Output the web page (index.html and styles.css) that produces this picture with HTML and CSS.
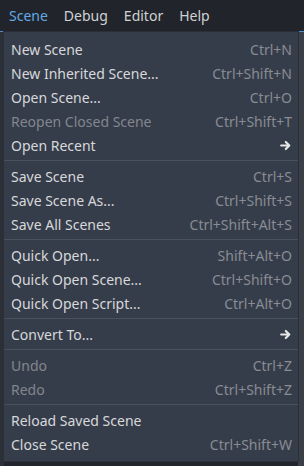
FILE: index.html
```html
<!DOCTYPE html>
<html lang="en">
<head>
    <meta charset="UTF-8">
    <meta name="viewport" content="width=device-width, initial-scale=1.0">
    <title>Scene Menu</title>
    <link rel="stylesheet" href="styles.css">
</head>
<body>
    <div class="menubar">
        <span class="menubar-item active">Scene</span>
        <span class="menubar-item">Debug</span>
        <span class="menubar-item">Editor</span>
        <span class="menubar-item">Help</span>
    </div>
    <div class="workspace">
        <div class="panel-left"></div>
        <div class="panel-right"></div>
    </div>

    <div class="popup">
        <div class="item"><span>New Scene</span><span class="shortcut">Ctrl+N</span></div>
        <div class="item"><span>New Inherited Scene...</span><span class="shortcut">Ctrl+Shift+N</span></div>
        <div class="item"><span>Open Scene...</span><span class="shortcut">Ctrl+O</span></div>
        <div class="item disabled"><span>Reopen Closed Scene</span><span class="shortcut">Ctrl+Shift+T</span></div>
        <div class="item"><span>Open Recent</span>
            <svg class="arrow" width="11" height="11" viewBox="0 0 11 11"><path d="M1.2 5.5H9.3M5.8 2L9.3 5.5L5.8 9" fill="none" stroke="#e6e6e6" stroke-width="2.2" stroke-linecap="round" stroke-linejoin="round"/></svg>
        </div>
        <div class="separator"></div>
        <div class="item"><span>Save Scene</span><span class="shortcut">Ctrl+S</span></div>
        <div class="item"><span>Save Scene As...</span><span class="shortcut">Ctrl+Shift+S</span></div>
        <div class="item"><span>Save All Scenes</span><span class="shortcut">Ctrl+Shift+Alt+S</span></div>
        <div class="separator"></div>
        <div class="item"><span>Quick Open...</span><span class="shortcut">Shift+Alt+O</span></div>
        <div class="item"><span>Quick Open Scene...</span><span class="shortcut">Ctrl+Shift+O</span></div>
        <div class="item"><span>Quick Open Script...</span><span class="shortcut">Ctrl+Alt+O</span></div>
        <div class="separator"></div>
        <div class="item"><span>Convert To...</span>
            <svg class="arrow" width="11" height="11" viewBox="0 0 11 11"><path d="M1.2 5.5H9.3M5.8 2L9.3 5.5L5.8 9" fill="none" stroke="#e6e6e6" stroke-width="2.2" stroke-linecap="round" stroke-linejoin="round"/></svg>
        </div>
        <div class="separator"></div>
        <div class="item disabled"><span>Undo</span><span class="shortcut">Ctrl+Z</span></div>
        <div class="item disabled"><span>Redo</span><span class="shortcut">Ctrl+Shift+Z</span></div>
        <div class="separator"></div>
        <div class="item"><span>Reload Saved Scene</span></div>
        <div class="item"><span>Close Scene</span><span class="shortcut">Ctrl+Shift+W</span></div>
    </div>
</body>
</html>
```

FILE: styles.css
```css
body {
    margin: 0;
    background-color: #21252b;
    font-family: "Noto Sans", "Open Sans", sans-serif;
    font-size: 14px;
    color: #d6d8db;
    width: 304px;
    height: 466px;
    overflow: hidden;
    position: relative;
}

.menubar {
    display: flex;
    height: 31px;
    align-items: center;
    padding-left: 1px;
    background-color: #21252b;
}

.menubar-item {
    padding: 0 8px;
    color: #cfd1d4;
    line-height: 31px;
}

.menubar-item.active {
    color: #62a9e6;
}

.workspace {
    display: flex;
    justify-content: space-between;
    height: 435px;
    border-top: 1px solid #4d8fcf;
}

.panel-left {
    width: 4px;
    background-color: #2b3038;
}

.panel-right {
    width: 6px;
    background-color: #3a3f47;
}

.popup {
    position: absolute;
    top: 31px;
    left: 3px;
    width: 294px;
    padding: 5px 0 5px;
    background-color: #363d4a;
    border: 1px solid #2a2f38;
}

.item {
    display: flex;
    justify-content: space-between;
    align-items: center;
    height: 24px;
    padding: 0 6px 0 7px;
    white-space: nowrap;
}

.item.disabled {
    color: #82868e;
}

.shortcut {
    color: #888c94;
}

.arrow {
    margin-right: 1px;
}

.separator {
    height: 1px;
    margin: 3px 0;
    background-color: #4a515d;
}
```
